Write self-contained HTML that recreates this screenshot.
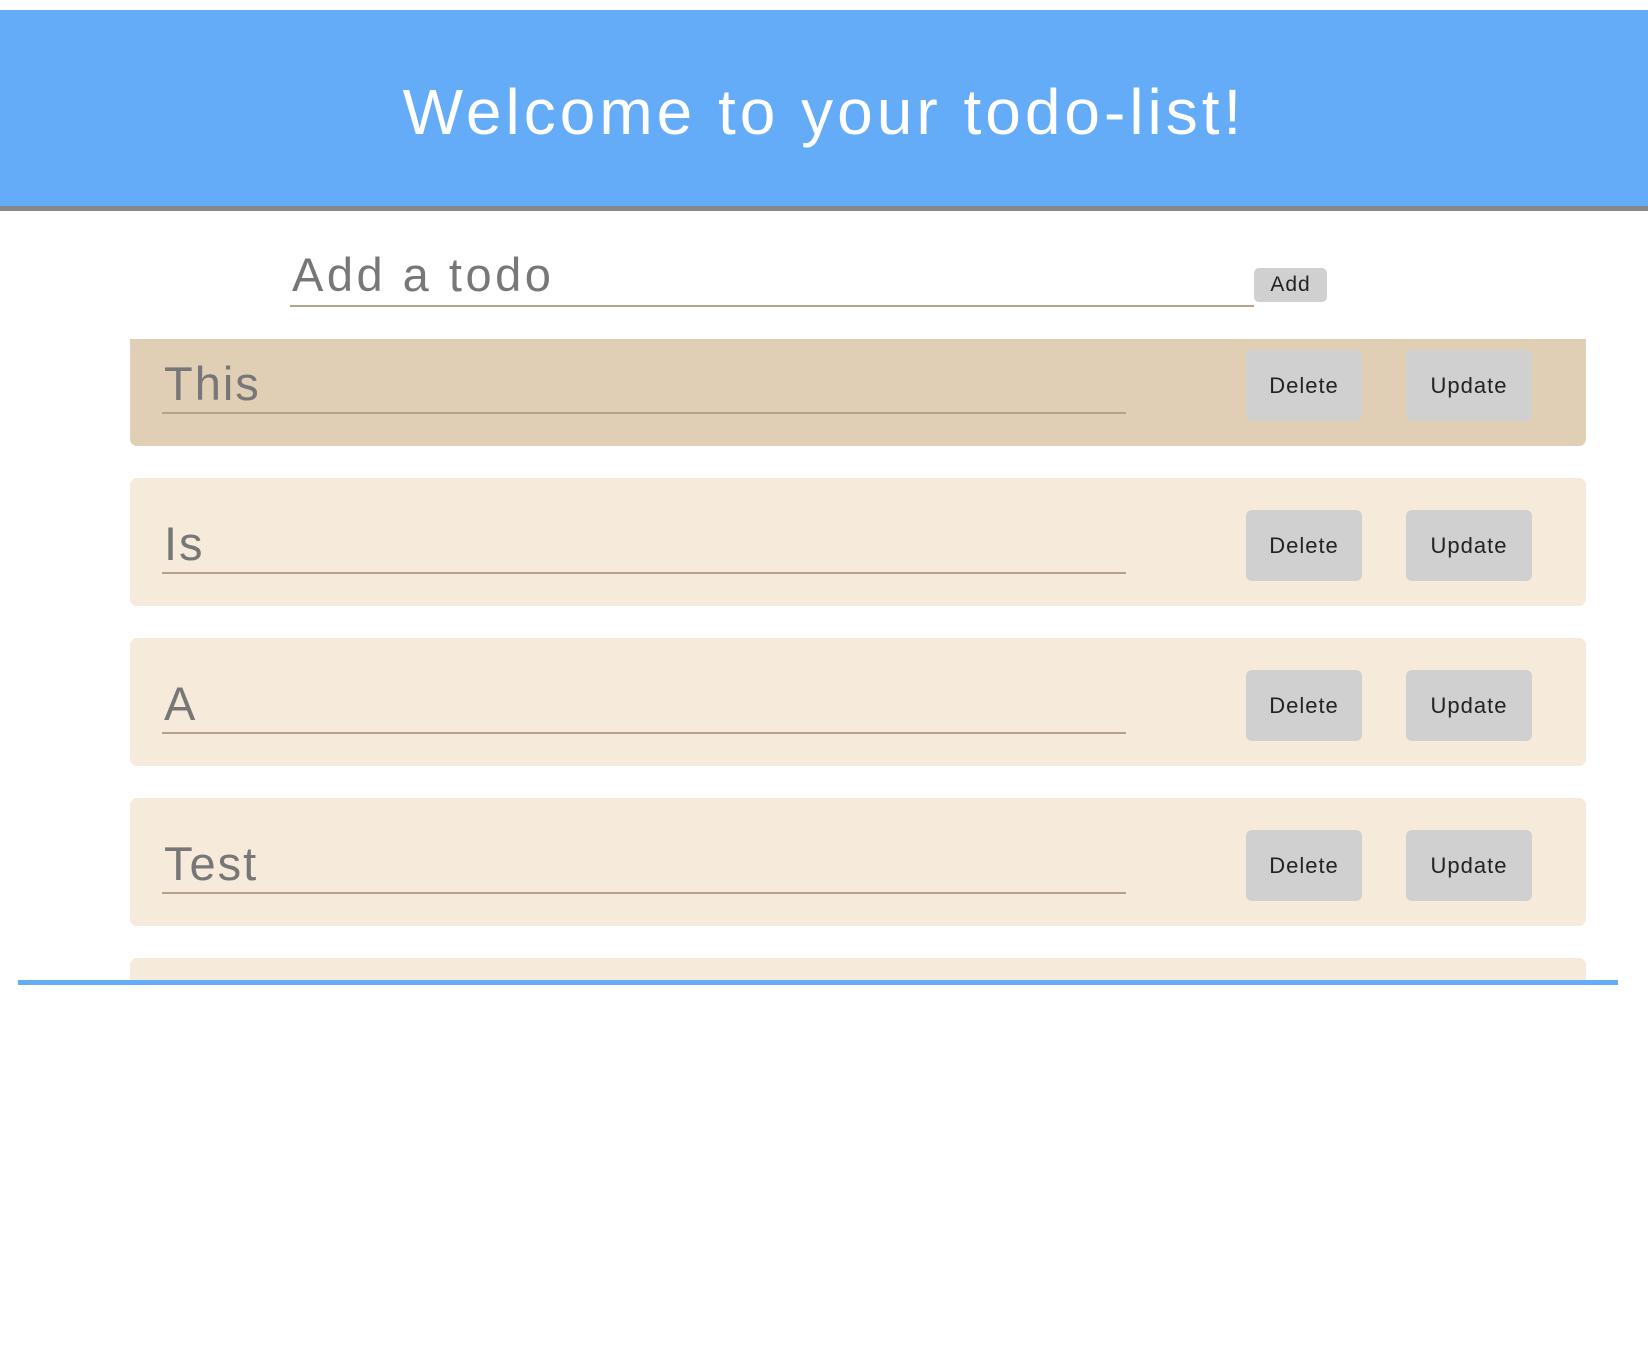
<!DOCTYPE html>
<html><head><meta charset="utf-8"><style>
*{box-sizing:border-box;margin:0;padding:0}
body{width:1648px;height:1354px;background:#fff;font-family:"Liberation Sans",sans-serif;position:relative;overflow:hidden}
.hdr{position:absolute;left:0;top:10px;width:1648px;height:201px;background:#64acf7;border-bottom:5px solid #888}
.hdr h1{position:absolute;left:0;right:0;top:62px;text-align:center;color:#fff;font-weight:normal;font-size:64px;line-height:80px;letter-spacing:4px}
.add{position:absolute;left:290px;top:246px;width:964px;height:61px;border-bottom:2px solid #b5a28a;color:#777;font-size:47px;padding-left:2px;line-height:58px;letter-spacing:3.5px}
.addb{position:absolute;left:1254px;top:268px;width:73px;height:34px;background:#d0d0d0;border-radius:5px;font-size:21px;color:#222;text-align:center;line-height:34px;letter-spacing:1px}
.wrap{position:absolute;left:0;top:339px;width:1648px;height:641px;overflow:hidden}
.row{position:absolute;left:130px;width:1456px;height:128px;background:#f6ebdb;border-radius:7px}
.row.sel{background:#e0cfb5}
.t{position:absolute;left:32px;top:38px;width:964px;height:58px;border-bottom:2px solid #b5a28a;color:#777;font-size:47px;line-height:56px;padding-left:2px;letter-spacing:2px}
.b{position:absolute;top:32px;height:71px;background:#d0d0d0;border-radius:6px;color:#222;font-size:22px;text-align:center;line-height:71px;letter-spacing:1px}
.d{left:1116px;width:116px}.u{left:1276px;width:126px}
.line{position:absolute;left:18px;top:980px;width:1600px;height:5px;background:#64acf7}
</style></head><body>
<div class="hdr"><h1>Welcome to your todo-list!</h1></div>
<div class="add">Add a todo</div>
<div class="addb">Add</div>
<div class="wrap">
<div class="row sel" style="top:-21px"><div class="t">This</div><div class="b d">Delete</div><div class="b u">Update</div></div>
<div class="row" style="top:139px"><div class="t">Is</div><div class="b d">Delete</div><div class="b u">Update</div></div>
<div class="row" style="top:299px"><div class="t">A</div><div class="b d">Delete</div><div class="b u">Update</div></div>
<div class="row" style="top:459px"><div class="t">Test</div><div class="b d">Delete</div><div class="b u">Update</div></div>
<div class="row" style="top:619px"></div>
</div>
<div class="line"></div>
</body></html>
